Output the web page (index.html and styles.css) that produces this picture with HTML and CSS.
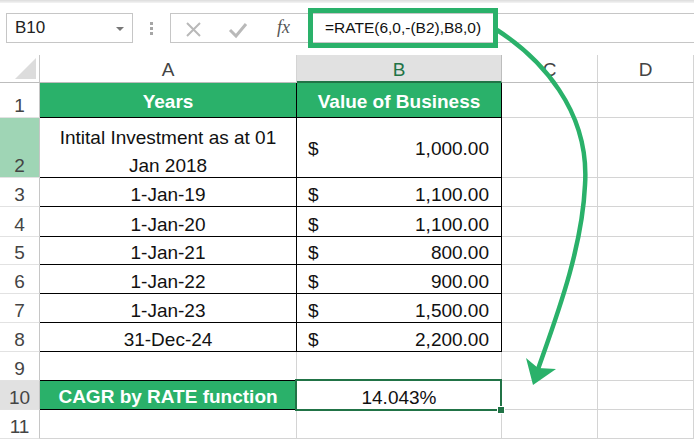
FILE: index.html
```html
<!DOCTYPE html>
<html>
<head>
<meta charset="utf-8">
<link rel="stylesheet" href="styles.css">
</head>
<body>
<div class="page">
  <div class="topstrip"></div>
  <div class="fbar">
    <div class="namebox">
      <span class="name">B10</span>
      <span class="caret"></span>
    </div>
    <div class="dots"><i></i><i></i><i></i></div>
    <div class="btns">
      <svg class="ico" width="137" height="28" viewBox="0 0 137 28">
        <path d="M16 9 L29 22 M29 9 L16 22" stroke="#b9b9b9" stroke-width="2" fill="none"/>
        <path d="M59 16 L65 22 L75 10" stroke="#b9b9b9" stroke-width="3" fill="none"/>
      </svg>
      <span class="fx">fx</span>
    </div>
    <div class="formula">
      <div class="hl"></div>
      <span class="ftext">=RATE(6,0,-(B2),B8,0)</span>
    </div>
  </div>
  <div class="sheet">
    <div class="ch corner"><span class="tri"></span></div>
    <div class="ch">A</div>
    <div class="ch chsel">B</div>
    <div class="ch">C</div>
    <div class="ch">D</div>

    <div class="rh">1</div>
    <div class="c hd bk">Years</div>
    <div class="c hd bk">Value of Business</div>
    <div class="c"></div>
    <div class="c"></div>

    <div class="rh rhsel">2</div>
    <div class="c bk ctr wrap">Intital Investment as at 01 Jan 2018</div>
    <div class="c bk acc mid"><span>$</span><span>1,000.00</span></div>
    <div class="c"></div>
    <div class="c"></div>

    <div class="rh">3</div>
    <div class="c bk ctr">1-Jan-19</div>
    <div class="c bk acc"><span>$</span><span>1,100.00</span></div>
    <div class="c"></div>
    <div class="c"></div>

    <div class="rh">4</div>
    <div class="c bk ctr">1-Jan-20</div>
    <div class="c bk acc"><span>$</span><span>1,100.00</span></div>
    <div class="c"></div>
    <div class="c"></div>

    <div class="rh">5</div>
    <div class="c bk ctr">1-Jan-21</div>
    <div class="c bk acc"><span>$</span><span>800.00</span></div>
    <div class="c"></div>
    <div class="c"></div>

    <div class="rh">6</div>
    <div class="c bk ctr">1-Jan-22</div>
    <div class="c bk acc"><span>$</span><span>900.00</span></div>
    <div class="c"></div>
    <div class="c"></div>

    <div class="rh">7</div>
    <div class="c bk ctr">1-Jan-23</div>
    <div class="c bk acc"><span>$</span><span>1,500.00</span></div>
    <div class="c"></div>
    <div class="c"></div>

    <div class="rh">8</div>
    <div class="c bk ctr">31-Dec-24</div>
    <div class="c bk acc"><span>$</span><span>2,200.00</span></div>
    <div class="c"></div>
    <div class="c"></div>

    <div class="rh">9</div>
    <div class="c bkb"></div>
    <div class="c"></div>
    <div class="c"></div>
    <div class="c"></div>

    <div class="rh rhgray">10</div>
    <div class="c hd bkb">CAGR by RATE function</div>
    <div class="c ctr sel">14.043%</div>
    <div class="c"></div>
    <div class="c"></div>

    <div class="rh">11</div>
    <div class="c"></div>
    <div class="c"></div>
    <div class="c"></div>
    <div class="c"></div>
  </div>
  <svg class="arrow" width="694" height="439" viewBox="0 0 694 439">
    <path d="M497 30 C540 58 590 110 585 185 C582 250 556 318 537 372" stroke="#2ab16a" stroke-width="4.5" fill="none"/>
    <polygon points="533,385 526,358 538,368 556,369" fill="#2ab16a"/>
  </svg>
</div>
</body>
</html>
```
FILE: styles.css
```css
* { box-sizing: border-box; }
html, body { margin: 0; padding: 0; }
body {
  background: #fff;
  font-family: "Liberation Sans", Arial, sans-serif;
  color: #111;
}
.page {
  position: relative;
  width: 694px;
  height: 439px;
  overflow: hidden;
}
.topstrip {
  height: 3px;
  background: linear-gradient(#dcdcdc, #f4f4f4);
}
.fbar {
  height: 52px;
  display: flex;
  align-items: flex-start;
  padding: 10px 0 0 6px;
}
.namebox {
  width: 127px;
  height: 30px;
  border: 1px solid #c6c6c6;
  display: flex;
  align-items: center;
  justify-content: space-between;
  padding: 0 8px 0 8px;
  font-size: 17px;
  color: #222;
}
.caret {
  width: 0; height: 0;
  border-left: 4px solid transparent;
  border-right: 4px solid transparent;
  border-top: 4px solid #777;
  margin-top: 1px;
}
.dots {
  width: 37px;
  height: 30px;
  display: flex;
  flex-direction: column;
  align-items: center;
  justify-content: center;
  gap: 2px;
}
.dots i {
  display: block;
  width: 3px;
  height: 3px;
  background: #a6a6a6;
}
.btns {
  position: relative;
  width: 138px;
  height: 30px;
  border: 1px solid #c6c6c6;
  border-right: none;
}
.ico { position: absolute; left: 0; top: 0; }
.fx {
  position: absolute;
  left: 106px;
  top: 3px;
  font-family: "Liberation Serif", "Times New Roman", serif;
  font-style: italic;
  font-size: 18px;
  color: #555;
}
.formula {
  position: relative;
  flex: 1;
  height: 30px;
  border-top: 1px solid #c6c6c6;
  border-bottom: 1px solid #c6c6c6;
  display: flex;
  align-items: center;
  padding-left: 17px;
  font-size: 15.5px;
  color: #111;
}
.hl {
  position: absolute;
  left: 0;
  top: -6px;
  width: 190px;
  height: 40px;
  border: 5px solid #2ab16a;
}
.ftext { position: relative; }

.sheet {
  display: grid;
  grid-template-columns: 40px 257px 205px 96px 96px;
  grid-template-rows: 28px 35px 60px 29px 30px 28px 29px 29px 29px 29px 29px 29px;
  font-size: 19px;
}
.ch {
  display: flex;
  align-items: center;
  justify-content: center;
  border-right: 1px solid #d4d4d4;
  border-bottom: 1px solid #bdbdbd;
  color: #444;
  padding-top: 3px;
}
.corner {
  position: relative;
  border-right: 1px solid #c6c6c6;
}
.tri {
  position: absolute;
  right: 3px;
  bottom: 3px;
  width: 0; height: 0;
  border-left: 21px solid transparent;
  border-bottom: 21px solid #dcdcdc;
}
.chsel {
  background: #e1e1e1;
  color: #217346;
  border-bottom: 2px solid #217346;
  border-right-color: #bdbdbd;
}
.rh {
  display: flex;
  align-items: flex-end;
  justify-content: center;
  padding-bottom: 0;
  border-right: 1px solid #c6c6c6;
  border-bottom: 1px solid #e2e2e2;
  color: #444;
  line-height: 22px;
}
.rhsel { background: #9fd5b5; }
.rhgray { background: #e1e1e1; }
.c {
  display: flex;
  align-items: flex-end;
  padding-bottom: 0;
  border-right: 1px solid #d4d4d4;
  border-bottom: 1px solid #d4d4d4;
  line-height: 22px;
}
.bk { border-right-color: #000; border-bottom-color: #000; }
.bkb { border-bottom-color: #000; }
.hd {
  background: #2ab16a;
  color: #fff;
  font-weight: bold;
  justify-content: center;
  align-items: center;
  padding-top: 4px;
}
.ctr { justify-content: center; }
.wrap {
  text-align: center;
  line-height: 28px;
  padding: 8px 8px 0 8px;
  align-items: center;
}
.acc {
  justify-content: space-between;
  padding-left: 11px;
  padding-right: 12px;
}
.mid { align-items: center; padding-top: 2px; }
.sel { position: relative; }
.sel::after {
  content: "";
  position: absolute;
  left: -2px;
  top: -2px;
  right: -1px;
  bottom: -2px;
  border: 2px solid #217346;
}
.sel::before {
  content: "";
  position: absolute;
  right: -4px;
  bottom: -5px;
  width: 6px;
  height: 6px;
  background: #217346;
  border: 1px solid #fff;
  z-index: 2;
}
.arrow {
  position: absolute;
  left: 0;
  top: 0;
  pointer-events: none;
}
```
